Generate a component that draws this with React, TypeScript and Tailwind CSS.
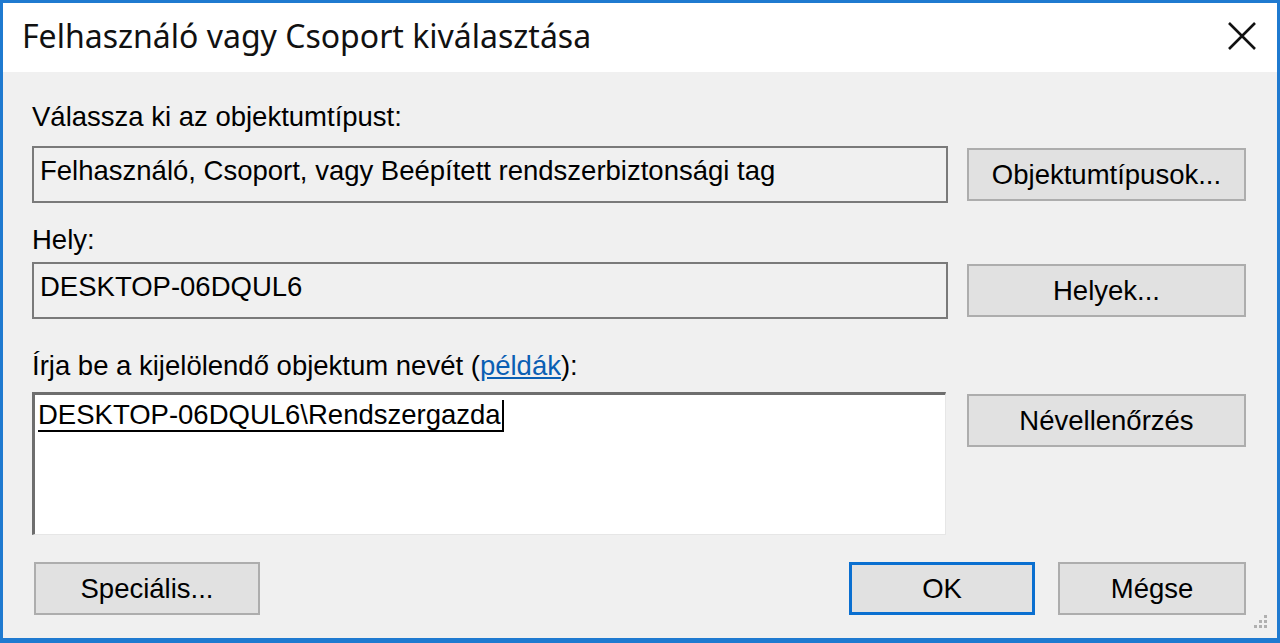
function Btn({ children, className = "" }: { children: React.ReactNode; className?: string }) {
  return (
    <div
      className={
        "flex items-center justify-center h-[53px] bg-[#e1e1e1] border-2 border-[#adadad] text-[27.5px] text-black " +
        className
      }
    >
      {children}
    </div>
  )
}

function Field({ children }: { children: React.ReactNode }) {
  return (
    <div className="flex-1 h-[57px] border-2 border-[#7a7a7a] bg-[#f0f0f0] pl-[6px] pt-[8px] text-[27.5px] leading-[30px] text-black">
      {children}
    </div>
  )
}

export default function App() {
  return (
    <div className="relative w-[1280px] h-[643px] flex flex-col border-x-[3px] border-t-[3px] border-b-[5px] border-[#1f7ad0] bg-[#f0f0f0] font-['Liberation_Sans',Arial,sans-serif] text-black overflow-hidden">
      {/* title bar */}
      <div className="h-[69px] shrink-0 bg-white flex items-center justify-between pl-[19px] pr-[20px]">
        <span className="font-['Noto_Sans',sans-serif] text-[32px] leading-none text-[#111] pb-[4px]">
          Felhasználó vagy Csoport kiválasztása
        </span>
        <svg width="30" height="30" viewBox="0 0 30 30" className="mb-[4px]">
          <path d="M2 2 L28 28 M28 2 L2 28" stroke="#111" strokeWidth="2.6" />
        </svg>
      </div>

      {/* body */}
      <div className="flex-1 flex flex-col pl-[29px] pr-[31px] pt-[30px]">
        <p className="text-[27.5px] leading-[30px]">Válassza ki az objektumtípust:</p>
        <div className="mt-[14px] flex items-center gap-[19px]">
          <Field>Felhasználó, Csoport, vagy Beépített rendszerbiztonsági tag</Field>
          <Btn className="w-[279px]">Objektumtípusok...</Btn>
        </div>

        <p className="mt-[22px] text-[27.5px] leading-[30px]">Hely:</p>
        <div className="mt-[7px] flex items-center gap-[19px]">
          <Field>DESKTOP-06DQUL6</Field>
          <Btn className="w-[279px]">Helyek...</Btn>
        </div>

        <p className="mt-[32px] text-[27.5px] leading-[30px]">
          Írja be a kijelölendő objektum nevét (
          <span className="text-[#0a5fb4] underline">példák</span>):
        </p>
        <div className="mt-[11px] flex items-start gap-[21px]">
          <div className="flex-1 h-[143px] bg-white border-t-[3px] border-l-[3px] border-r border-b border-t-[#6e6e6e] border-l-[#6e6e6e] border-r-[#e6e6e6] border-b-[#e6e6e6] pl-[3px] pt-[5px]">
            <span className="inline-block text-[27.5px] leading-[30px] border-b-2 border-r-2 border-black pr-[1px]">
              DESKTOP-06DQUL6\Rendszergazda
            </span>
          </div>
          <Btn className="w-[279px] mt-[2px]">Névellenőrzés</Btn>
        </div>

        <div className="mt-[27px] flex items-center justify-between">
          <Btn className="w-[226px] ml-[2px]">Speciális...</Btn>
          <div className="flex gap-[23px]">
            <div className="flex items-center justify-center w-[186px] h-[53px] bg-[#e1e1e1] border-[3px] border-[#0a6fd0] text-[27.5px]">
              OK
            </div>
            <Btn className="w-[188px]">Mégse</Btn>
          </div>
        </div>
      </div>

      {/* resize grip */}
      <svg width="20" height="20" viewBox="0 0 20 20" className="absolute right-[8px] bottom-[6px]">
        <g fill="#b0b0b0">
          <rect x="15" y="3" width="3" height="3" />
          <rect x="10" y="8" width="3" height="3" />
          <rect x="15" y="8" width="3" height="3" />
          <rect x="5" y="13" width="3" height="3" />
          <rect x="10" y="13" width="3" height="3" />
          <rect x="15" y="13" width="3" height="3" />
        </g>
      </svg>
    </div>
  )
}
